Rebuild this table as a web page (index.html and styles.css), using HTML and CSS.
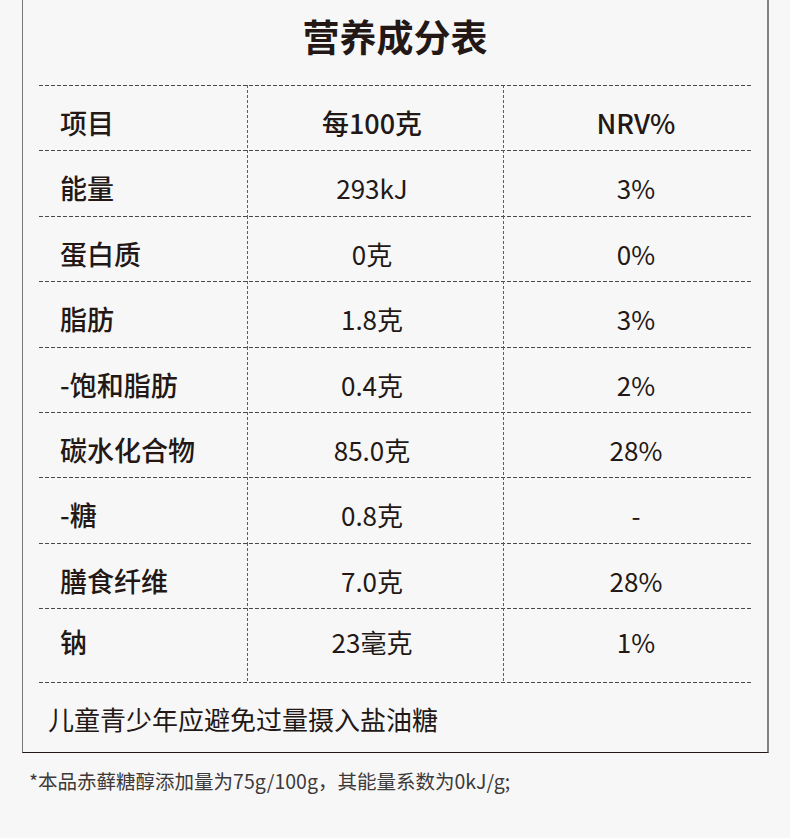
FILE: index.html
```html
<!DOCTYPE html>
<html lang="zh-CN">
<head>
<meta charset="utf-8">
<title>营养成分表</title>
<link rel="stylesheet" href="styles.css">
</head>
<body>
<div class="card">
  <h1 class="title">营养成分表</h1>
  <div class="table">
    <div class="row head">
      <div class="cell name">项目</div>
      <div class="cell amount">每100克</div>
      <div class="cell nrv">NRV%</div>
    </div>
    <div class="row">
      <div class="cell name">能量</div>
      <div class="cell amount">293kJ</div>
      <div class="cell nrv">3%</div>
    </div>
    <div class="row">
      <div class="cell name">蛋白质</div>
      <div class="cell amount">0克</div>
      <div class="cell nrv">0%</div>
    </div>
    <div class="row">
      <div class="cell name">脂肪</div>
      <div class="cell amount">1.8克</div>
      <div class="cell nrv">3%</div>
    </div>
    <div class="row">
      <div class="cell name">-饱和脂肪</div>
      <div class="cell amount">0.4克</div>
      <div class="cell nrv">2%</div>
    </div>
    <div class="row">
      <div class="cell name">碳水化合物</div>
      <div class="cell amount">85.0克</div>
      <div class="cell nrv">28%</div>
    </div>
    <div class="row">
      <div class="cell name">-糖</div>
      <div class="cell amount">0.8克</div>
      <div class="cell nrv">-</div>
    </div>
    <div class="row">
      <div class="cell name">膳食纤维</div>
      <div class="cell amount">7.0克</div>
      <div class="cell nrv">28%</div>
    </div>
    <div class="row last">
      <div class="cell name">钠</div>
      <div class="cell amount">23毫克</div>
      <div class="cell nrv">1%</div>
    </div>
    <div class="foot">儿童青少年应避免过量摄入盐油糖</div>
  </div>
</div>
<p class="note">*本品赤藓糖醇添加量为75g/100g，其能量系数为0kJ/g;</p>
</body>
</html>
```

FILE: styles.css
```css
html, body {
  margin: 0;
  padding: 0;
  background: #f7f7f7;
}

body {
  font-family: "Noto Sans CJK SC", "Noto Sans", sans-serif;
  color: #231815;
  width: 790px;
  height: 838px;
}

.card {
  margin-left: 22px;
  width: 712px;
  padding: 0 16px;
  box-sizing: content-box;
  border-left: 1px solid #7c7878;
  border-right: 2px solid #858282;
  border-bottom: 1px solid #231815;
}

.title {
  margin: 0;
  height: 85px;
  box-sizing: border-box;
  padding-bottom: 13px;
  display: flex;
  align-items: center;
  justify-content: center;
  font-size: 37px;
  font-weight: 700;
  line-height: 1;
  letter-spacing: 0;
}

.table {
  width: 712px;
}

.row {
  display: grid;
  grid-template-columns: 208px 256px 248px;
  height: 65.375px;
  background-image: repeating-linear-gradient(90deg, #4a4a4a 0 4px, transparent 4px 6px);
  background-size: 100% 1px;
  background-repeat: no-repeat;
  background-position: left top;
}

.row.last {
  height: 74px;
}

.cell {
  display: flex;
  align-items: flex-start;
  padding-top: 24px;
  font-size: 26px;
  line-height: 27px;
  white-space: nowrap;
}

.row.last .cell {
  padding-top: 20px;
}

.cell.name {
  padding-left: 21px;
  font-size: 27px;
  font-weight: 500;
}

.cell.amount,
.cell.nrv {
  justify-content: center;
  background-image: repeating-linear-gradient(180deg, #5e5e5e 0 3px, transparent 3px 5px);
  background-size: 1px 100%;
  background-repeat: no-repeat;
  background-position: left top;
}

.cell.amount {
  padding-right: 6px;
}

.cell.nrv {
  padding-left: 18px;
}

.head .cell {
  font-weight: 500;
  font-size: 27px;
}

.foot {
  height: 70px;
  box-sizing: border-box;
  padding-left: 9px;
  padding-top: 22px;
  font-size: 26px;
  line-height: 30px;
  background-image: repeating-linear-gradient(90deg, #4a4a4a 0 4px, transparent 4px 6px);
  background-size: 100% 1px;
  background-repeat: no-repeat;
  background-position: left top;
}

.note {
  margin: 16px 0 0 29px;
  font-size: 19.5px;
  line-height: 24px;
  color: #3d3a39;
}
```
